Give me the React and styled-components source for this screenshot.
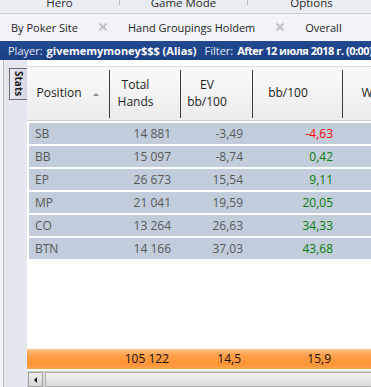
import React from "react";
import styled, { createGlobalStyle } from "styled-components";

const GlobalStyle = createGlobalStyle`
  html, body {
    margin: 0;
    padding: 0;
    background: #ffffff;
  }
  body {
    font-family: "Open Sans", "Noto Sans", sans-serif;
  }
`;

const rows = [
  { pos: "SB", hands: "14 881", ev: "-3,49", bb: "-4,63" },
  { pos: "BB", hands: "15 097", ev: "-8,74", bb: "0,42" },
  { pos: "EP", hands: "26 673", ev: "15,54", bb: "9,11" },
  { pos: "MP", hands: "21 041", ev: "19,59", bb: "20,05" },
  { pos: "CO", hands: "13 264", ev: "26,63", bb: "34,33" },
  { pos: "BTN", hands: "14 166", ev: "37,03", bb: "43,68" },
];

const COLS = "82px 71px 72px 90px 90px";

const App = () => {
  return (
    <>
      <GlobalStyle />
      <Window>
        <MenuRow>
          <MenuItem $w={119}>Hero</MenuItem>
          <MenuItem $w={128} $sep>Game Mode</MenuItem>
          <MenuItem $w={128} $sep>Options</MenuItem>
        </MenuRow>

        <TabRow>
          <Tab>By Poker Site</Tab>
          <CloseIcon />
          <Tab>Hand Groupings Holdem</Tab>
          <CloseIcon />
          <Tab>Overall</Tab>
        </TabRow>

        <InfoBar>
          <span>Player:</span>
          <b>givememymoney$$$ (Alias)</b>
          <Spacer />
          <span>Filter:</span>
          <b className="filter">After 12 июля 2018 г. (0:00)</b>
        </InfoBar>

        <Body>
          <SideStrip>
            <SideTab>Stats</SideTab>
          </SideStrip>

          <Grid>
            <Header>
              <HeadCell>
                <HeadLabel>Position</HeadLabel>
                <SortSlot>
                  <SortArrow />
                </SortSlot>
              </HeadCell>
              <HeadCell $sep>
                <HeadLabel>
                  Total
                  <br />
                  Hands
                </HeadLabel>
                <SortSlot />
              </HeadCell>
              <HeadCell $sep>
                <HeadLabel>
                  EV
                  <br />
                  bb/100
                </HeadLabel>
                <SortSlot />
              </HeadCell>
              <HeadCell $sep>
                <HeadLabel>bb/100</HeadLabel>
                <SortSlot />
              </HeadCell>
              <HeadCell $sep>
                <HeadLabel>W$SD</HeadLabel>
                <SortSlot />
              </HeadCell>
            </Header>

            <RowList>
              {rows.map((r) => (
                <Row key={r.pos}>
                  <Cell $left>{r.pos}</Cell>
                  <Cell>{r.hands}</Cell>
                  <Cell>{r.ev}</Cell>
                  <Cell $color={r.bb.startsWith("-") ? "#ff0000" : "#0a7a0a"}>
                    {r.bb}
                  </Cell>
                  <Cell />
                </Row>
              ))}
            </RowList>

            <Fill />

            <Footer>
              <FootCell />
              <FootCell>105 122</FootCell>
              <FootCell>14,5</FootCell>
              <FootCell>15,9</FootCell>
              <FootCell />
            </Footer>

            <ScrollBar>
              <ScrollButton>
                <LeftArrow />
              </ScrollButton>
              <ScrollThumb />
            </ScrollBar>
          </Grid>
        </Body>
      </Window>
    </>
  );
};

export default App;

const Window = styled.div`
  width: 371px;
  height: 387px;
  overflow: hidden;
  display: flex;
  flex-direction: column;
  background: #f3f5f8;
  color: #222;
`;

const MenuRow = styled.div`
  display: flex;
  height: 13px;
  overflow: hidden;
  background: #e9edf2;
  border-bottom: 1px solid #c9ced6;
  flex-shrink: 0;
`;

const MenuItem = styled.div`
  width: ${(p) => p.$w}px;
  flex-shrink: 0;
  height: 9px;
  font-size: 11.5px;
  line-height: 13px;
  text-align: center;
  color: #2a2a2a;
  margin-top: -4px;
  border-left: ${(p) => (p.$sep ? "1px solid #b9bec6" : "none")};
  box-sizing: border-box;
`;

const TabRow = styled.div`
  display: flex;
  align-items: center;
  gap: 21px;
  height: 26px;
  padding-left: 11px;
  background: #f1f3f6;
  flex-shrink: 0;
`;

const Tab = styled.span`
  font-size: 11px;
  color: #1e1e1e;
  white-space: nowrap;
`;

const CloseIconSvg = styled.svg`
  width: 8px;
  height: 8px;
  flex-shrink: 0;
`;

const CloseIcon = () => (
  <CloseIconSvg viewBox="0 0 8 8">
    <path d="M1.2 1.2 L6.8 6.8 M6.8 1.2 L1.2 6.8" stroke="#c2c2c2" strokeWidth="2.2" strokeLinecap="round" />
  </CloseIconSvg>
);

const InfoBar = styled.div`
  display: flex;
  align-items: center;
  gap: 4px;
  height: 19px;
  margin-top: 1px;
  padding-left: 8px;
  background: linear-gradient(#23498f, #1b3f84);
  color: #ffffff;
  font-size: 11px;
  white-space: nowrap;
  overflow: hidden;
  flex-shrink: 0;

  span {
    color: #e2e9f6;
  }
  b {
    font-weight: 700;
  }
  b.filter {
    letter-spacing: -0.5px;
  }
`;

const Spacer = styled.i`
  width: 6px;
`;

const Body = styled.div`
  flex: 1;
  display: flex;
  min-height: 0;
`;

const SideStrip = styled.div`
  width: 23px;
  margin-left: 3px;
  border-left: 1px solid #b4b9c2;
  background: #e4e8ee;
  display: flex;
  flex-direction: column;
  align-items: flex-end;
  padding-top: 8px;
  flex-shrink: 0;
`;

const SideTab = styled.div`
  writing-mode: vertical-rl;
  width: 18px;
  height: 32px;
  box-sizing: border-box;
  border: 1px solid #6a6a78;
  border-right: none;
  background: linear-gradient(to right, #eceaf4, #d7d5e6);
  font-size: 10px;
  font-weight: 700;
  color: #1a1a1a;
  display: flex;
  align-items: center;
  justify-content: center;
  line-height: 16px;
`;

const Grid = styled.div`
  flex: 1;
  display: flex;
  flex-direction: column;
  background: #ffffff;
  padding-top: 6px;
  min-width: 0;
`;

const Header = styled.div`
  display: grid;
  grid-template-columns: ${COLS};
  height: 55px;
  box-sizing: border-box;
  border-top: 1px solid #dcdcdc;
  border-bottom: 1px solid #cfcfcf;
  background: linear-gradient(#fafafa, #ececec);
  flex-shrink: 0;
`;

const HeadCell = styled.div`
  display: flex;
  align-items: center;
  position: relative;
  font-size: 12px;
  line-height: 16.5px;
  color: #1c1c1c;

  &::before {
    content: "";
    display: ${(p) => (p.$sep ? "block" : "none")};
    position: absolute;
    left: 0;
    top: 3px;
    bottom: 2px;
    width: 1px;
    background: #3c3c3c;
  }
`;

const HeadLabel = styled.div`
  flex: 1;
  text-align: center;
  white-space: nowrap;
`;

const SortSlot = styled.div`
  width: 18px;
  display: flex;
  align-items: center;
  justify-content: flex-start;
  flex-shrink: 0;
`;

const SortArrow = styled.span`
  width: 0;
  height: 0;
  margin-left: 2px;
  margin-top: 1px;
  border-left: 3.5px solid transparent;
  border-right: 3.5px solid transparent;
  border-bottom: 3.5px solid #8c8c8c;
`;

const RowList = styled.div`
  display: flex;
  flex-direction: column;
  gap: 2px;
  padding-top: 2px;
  padding-left: 2px;
`;

const Row = styled.div`
  display: grid;
  grid-template-columns: 80px 71px 72px 90px 90px;
  height: 21px;
  background: #c1cddb;
`;

const Cell = styled.div`
  font-size: 12px;
  line-height: 21px;
  color: ${(p) => p.$color || "#585858"};
  text-align: ${(p) => (p.$left ? "left" : "right")};
  padding: ${(p) => (p.$left ? "0 0 0 6px" : "0 9px 0 0")};
  white-space: nowrap;
`;

const Fill = styled.div`
  flex: 1;
`;

const Footer = styled.div`
  display: grid;
  grid-template-columns: ${COLS};
  height: 20px;
  background: linear-gradient(#ffc38a 0%, #ffa04a 30%, #ff9336 75%, #ffa452 100%);
  flex-shrink: 0;
`;

const FootCell = styled.div`
  font-size: 12px;
  line-height: 20px;
  color: #111;
  text-align: right;
  padding-right: 11px;
  white-space: nowrap;
`;

const ScrollBar = styled.div`
  display: flex;
  align-items: stretch;
  height: 15px;
  margin-top: 2px;
  background: linear-gradient(#e6e6e6, #d2d2d2);
  border-top: 1px solid #c8c8c8;
  flex-shrink: 0;
`;

const ScrollButton = styled.div`
  width: 15px;
  margin-left: 1px;
  box-sizing: border-box;
  border: 1px solid #a2a2a2;
  background: linear-gradient(#f0f0f0, #d6d6d6);
  display: flex;
  align-items: center;
  justify-content: center;
`;

const LeftArrow = styled.span`
  width: 0;
  height: 0;
  border-top: 3.5px solid transparent;
  border-bottom: 3.5px solid transparent;
  border-right: 3.5px solid #1a1a1a;
`;

const ScrollThumb = styled.div`
  flex: 1;
  margin-left: 2px;
  box-sizing: border-box;
  border: 1px solid #b0b0b0;
  border-right: none;
  background: linear-gradient(#f2f2f2, #dadada);
`;
